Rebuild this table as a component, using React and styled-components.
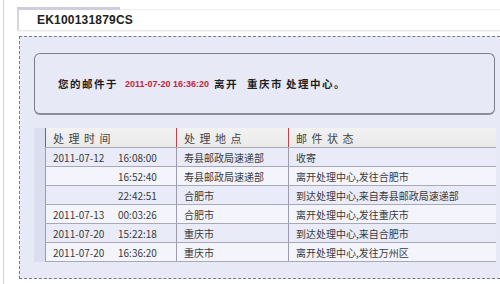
import React from 'react';
import styled, { createGlobalStyle } from 'styled-components';

const GlobalStyle = createGlobalStyle`
  html, body {
    margin: 0;
    padding: 0;
    background: #fff;
    overflow: hidden;
  }
  body {
    font-family: "Noto Sans CJK SC", "Liberation Sans", sans-serif;
  }
`;

const Frame = styled.div`
  margin-left: 3px;
  height: 284px;
  border-left: 1px solid #d2d2d8;
  padding: 7px 0 0 13px;
  box-sizing: border-box;
`;

const TitleRow = styled.div`
  display: flex;
  height: 23px;
  border-bottom: 1px solid #e6e6ea;
  box-shadow: 0 1px 0 #f4f4f6;
`;

const Tab = styled.div`
  width: 83px;
  border-top: 3px solid #cdcddf;
  border-left: 2px solid #d6d6e2;
  padding-left: 18px;
  display: flex;
  align-items: center;
  white-space: nowrap;
  font-family: "Liberation Sans", Arial, sans-serif;
  font-weight: bold;
  font-size: 12px;
  letter-spacing: 0.2px;
  color: #222;
  position: relative;
  z-index: 1;
`;

const TabRest = styled.div`
  flex: 1;
  margin-top: 2px;
  border-top: 1px solid #ececf0;
`;

const DashedBox = styled.div`
  margin: 5px 0 0 2px;
  height: 243px;
  box-sizing: border-box;
  background: #e7e9f7;
  border-top: 1px dashed #7a7a88;
  border-left: 1px dashed #7a7a88;
  border-bottom: 1px dashed #7a7a88;
  padding: 16px 0 0 14px;
`;

const Notice = styled.div`
  width: 461px;
  height: 62px;
  box-sizing: border-box;
  border: 1px solid #7c7e8e;
  border-bottom: 2px solid #8a8c9c;
  border-radius: 6px;
  display: flex;
  align-items: center;
  padding-left: 23px;
  font-weight: bold;
  font-size: 10.5px;
  letter-spacing: 1.5px;
  color: #1e1e1e;
  white-space: nowrap;
`;

const Stamp = styled.span`
  font-family: "Liberation Sans", Arial, sans-serif;
  font-size: 9px;
  letter-spacing: 0;
  color: #c4253c;
  margin: 0 5px 0 7px;
`;

const Gap = styled.span`
  display: inline-block;
  width: ${p => p.w}px;
`;

const TableWrap = styled.div`
  margin-top: 13px;
  width: 462px;
  border-left: 11px solid #dadeef;
  box-sizing: border-box;
`;

const Table = styled.table`
  width: 451px;
  border-collapse: collapse;
  table-layout: fixed;
  font-size: 10px;
  color: #3a3a3a;
`;

const HeadCell = styled.th`
  height: 19px;
  padding: 0 0 0 7px;
  text-align: left;
  font-weight: normal;
  font-size: 11px;
  color: #444;
  word-spacing: 2px;
  background: linear-gradient(#f2f2f2, #e9e9ea);
  border-left: 1px solid #c8404c;
  border-bottom: 1px solid #a9a9b5;
`;

const Row = styled.tr`
  background: ${p => (p.alt ? '#f4f5fc' : '#e9ecf8')};
`;

const Cell = styled.td`
  height: 18px;
  padding: 0 0 0 7px;
  border-left: 1px solid #9c9cac;
  border-bottom: 1px solid #a9a9b5;
  white-space: nowrap;
`;

const DatePart = styled.span`
  display: inline-block;
  width: 65px;
`;

const rows = [
  ['2011-07-12', '16:08:00', '寿县邮政局速递部', '收寄'],
  ['', '16:52:40', '寿县邮政局速递部', '离开处理中心,发往合肥市'],
  ['', '22:42:51', '合肥市', '到达处理中心,来自寿县邮政局速递部'],
  ['2011-07-13', '00:03:26', '合肥市', '离开处理中心,发往重庆市'],
  ['2011-07-20', '15:22:18', '重庆市', '到达处理中心,来自合肥市'],
  ['2011-07-20', '16:36:20', '重庆市', '离开处理中心,发往万州区'],
];

export default function App() {
  return (
    <>
      <GlobalStyle />
      <Frame>
        <TitleRow>
          <Tab>EK100131879CS</Tab>
          <TabRest />
        </TitleRow>
        <DashedBox>
          <Notice>
            您的邮件于
            <Stamp>2011-07-20 16:36:20</Stamp>
            离开<Gap w={9} />重庆市<Gap w={3} />处理中心。
          </Notice>
          <TableWrap>
            <Table>
              <colgroup>
                <col style={{ width: 131 }} />
                <col style={{ width: 112 }} />
                <col />
              </colgroup>
              <thead>
                <tr>
                  <HeadCell>处 理 时 间</HeadCell>
                  <HeadCell>处 理 地 点</HeadCell>
                  <HeadCell>邮 件 状 态</HeadCell>
                </tr>
              </thead>
              <tbody>
                {rows.map((r, i) => (
                  <Row key={i} alt={i % 2 === 1}>
                    <Cell>
                      <DatePart>{r[0]}</DatePart>
                      {r[1]}
                    </Cell>
                    <Cell>{r[2]}</Cell>
                    <Cell>{r[3]}</Cell>
                  </Row>
                ))}
              </tbody>
            </Table>
          </TableWrap>
        </DashedBox>
      </Frame>
    </>
  );
}
